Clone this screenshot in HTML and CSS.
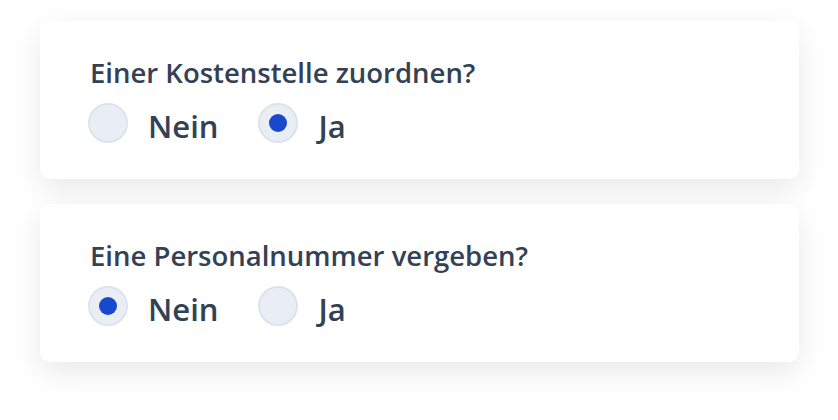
FILE: index.html
```html
<!DOCTYPE html>
<html lang="de">
<head>
    <meta charset="UTF-8">
    <title>Kostenstelle und Personalnummer</title>
    <link rel="stylesheet" href="styles.css">
</head>
<body>
    <div class="card">
        <p class="question">Einer Kostenstelle zuordnen?</p>
        <div class="options">
            <label class="option">
                <input type="radio" name="kostenstelle" value="nein">
                <span>Nein</span>
            </label>
            <label class="option">
                <input type="radio" name="kostenstelle" value="ja" checked>
                <span>Ja</span>
            </label>
        </div>
    </div>

    <div class="card">
        <p class="question">Eine Personalnummer vergeben?</p>
        <div class="options">
            <label class="option">
                <input type="radio" name="personalnummer" value="nein" checked>
                <span>Nein</span>
            </label>
            <label class="option">
                <input type="radio" name="personalnummer" value="ja">
                <span>Ja</span>
            </label>
        </div>
    </div>
</body>
</html>
```

FILE: styles.css
```css
body {
    margin: 0;
    padding: 21px 39px 58px 40px;
    background-color: #fff;
    font-family: "Open Sans", "Liberation Sans", sans-serif;
    color: #334155;
}
.card {
    background-color: #fff;
    border-radius: 10px;
    box-shadow: 0 10px 30px rgba(0, 0, 0, 0.09);
    padding: 36px 50px 36px 48px;
}
.card + .card {
    margin-top: 25px;
}
.question {
    margin: 0 0 0 2px;
    font-size: 27.5px;
    line-height: 32px;
    font-weight: 600;
}
.options {
    display: flex;
    gap: 40px;
    margin-top: 14px;
}
.option {
    display: flex;
    align-items: flex-start;
    gap: 20px;
    font-size: 31px;
    font-weight: 600;
    cursor: pointer;
}
.option span {
    padding-top: 7px;
    line-height: 32px;
}
.option input {
    appearance: none;
    -webkit-appearance: none;
    margin: 0;
    width: 40px;
    height: 40px;
    border: 2px solid #dde3ee;
    border-radius: 50%;
    background-color: #e9eef4;
    display: grid;
    place-items: center;
    cursor: pointer;
}
.option input:checked::after {
    content: "";
    width: 18px;
    height: 18px;
    border-radius: 50%;
    background-color: #1a48cc;
}
```
